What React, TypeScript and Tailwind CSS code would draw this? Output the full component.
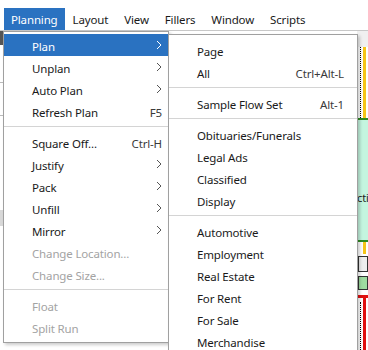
import React from "react";

const font = { fontFamily: '"Noto Sans", "Open Sans", sans-serif', letterSpacing: "-0.15px" };

type Item =
	| { sep: true }
	| { label: string; sub?: boolean; key?: string; off?: boolean; hot?: boolean };

const planning: Item[] = [
	{ label: "Plan", sub: true, hot: true },
	{ label: "Unplan", sub: true },
	{ label: "Auto Plan", sub: true },
	{ label: "Refresh Plan", key: "F5" },
	{ sep: true },
	{ label: "Square Off...", key: "Ctrl-H" },
	{ label: "Justify", sub: true },
	{ label: "Pack", sub: true },
	{ label: "Unfill", sub: true },
	{ label: "Mirror", sub: true },
	{ label: "Change Location...", off: true },
	{ label: "Change Size...", off: true },
	{ sep: true },
	{ label: "Float", off: true },
	{ label: "Split Run", off: true },
];

const planSub: Item[] = [
	{ label: "Page" },
	{ label: "All", key: "Ctrl+Alt-L" },
	{ sep: true },
	{ label: "Sample Flow Set", key: "Alt-1" },
	{ sep: true },
	{ label: "Obituaries/Funerals" },
	{ label: "Legal Ads" },
	{ label: "Classified" },
	{ label: "Display" },
	{ sep: true },
	{ label: "Automotive" },
	{ label: "Employment" },
	{ label: "Real Estate" },
	{ label: "For Rent" },
	{ label: "For Sale" },
	{ label: "Merchandise" },
];

const Chevron = ({ white }: { white?: boolean }) => (
	<svg width="6" height="10" viewBox="0 0 6 10" className="shrink-0 -mt-[3px]">
		<path d="M1 1 L5 5 L1 9" fill="none" stroke={white ? "#ffffff" : "#555555"} strokeWidth="1" />
	</svg>
);

const Rows = ({ items, left, right }: { items: Item[]; left: string; right: string }) => (
	<>
		{items.map((it, i) =>
			"sep" in it ? (
				<div key={i} className="h-[9px] flex items-center">
					<div className="h-px w-full bg-[#d4d4d4]" />
				</div>
			) : (
				<div
					key={i}
					className={`h-[22px] pt-[3px] flex items-center ${left} ${right} ${
						it.hot ? "bg-[#2a72c1] text-white" : it.off ? "text-[#a3a3a3]" : "text-[#1a1a1a]"
					}`}
				>
					<span className="flex-1 whitespace-nowrap">{it.label}</span>
					{it.key && <span className="text-[#3a3a3a] whitespace-nowrap">{it.key}</span>}
					{it.sub && <Chevron white={it.hot} />}
				</div>
			)
		)}
	</>
);

export default function App() {
	return (
		<div className="relative w-[368px] h-[350px] bg-white overflow-hidden text-[11.5px] leading-none" style={font}>
			{/* menu bar */}
			<div className="flex pt-2 pl-1 h-[30px] text-[#1a1a1a]">
				<div className="px-[7px] pt-[2px] flex items-center bg-[#2a72c1] text-white">Planning</div>
				<div className="px-[8px] pt-[2px] flex items-center">Layout</div>
				<div className="px-[8px] pt-[2px] flex items-center">View</div>
				<div className="px-[8px] pt-[2px] flex items-center">Fillers</div>
				<div className="px-[8px] pt-[2px] flex items-center">Window</div>
				<div className="px-[8px] pt-[2px] flex items-center">Scripts</div>
			</div>
			<div className="h-px bg-[#c8c8c8]" />

			{/* app canvas behind the menus */}
			<div className="absolute left-0 top-[31px] w-[3px] h-[14px] bg-[#555]" />
			<div className="absolute left-0 top-[82px] w-[3px] h-px bg-[#bbb]" />
			<div className="absolute left-0 top-[115px] w-[3px] h-px bg-[#bbb]" />
			<div className="absolute left-0 top-[210px] w-[3px] h-[16px] bg-[#d8d8d8]" />
			<div className="absolute left-[357px] top-[31px] w-[11px] h-[16px] bg-[#f0f0f0]" />
			<div className="absolute left-[360px] top-[47px] h-[71px] border-l border-dotted border-black" />
			<div className="absolute left-[363px] top-[47px] w-[3px] h-[71px] bg-[#f5c518]" />
			<div className="absolute left-[357px] top-[118px] w-[11px] h-[124px] bg-[#c3f5df] border-y-2 border-[#2e8b22] overflow-hidden">
				<span className="absolute left-0 top-[72px] text-[11px] text-[#222] whitespace-nowrap">ctio</span>
			</div>
			<div className="absolute left-[363px] top-[242px] w-[3px] h-[12px] bg-[#f5c518]" />
			<div className="absolute left-[358px] top-[256px] w-[10px] h-[16px] border border-[#333] bg-[#eee]" />
			<div className="absolute left-[358px] top-[276px] w-[10px] h-[14px] border border-[#333] bg-[#9fdca0]" />
			<div className="absolute left-[358px] top-[295px] w-[10px] h-[3px] bg-[#e01010]" />
			<div className="absolute left-[363px] top-[295px] w-[3px] h-[55px] bg-[#e01010]" />
			<div className="absolute left-[360px] top-[302px] h-[48px] border-l border-dotted border-black" />

			{/* Planning dropdown */}
			<div className="absolute left-[3px] top-[31px] w-[166px] bg-white border border-[#a0a0a0] pt-[2px] pb-[4px] shadow-[2px_2px_3px_rgba(0,0,0,0.2)]">
				<Rows items={planning} left="pl-[28px]" right="pr-[6px]" />
			</div>

			{/* Plan submenu */}
			<div className="absolute left-[168px] top-[34px] w-[190px] bg-white border border-[#a0a0a0] pt-[4px] pb-[4px] shadow-[2px_2px_3px_rgba(0,0,0,0.2)]">
				<Rows items={planSub} left="pl-[28px]" right="pr-[13px]" />
			</div>
		</div>
	);
}
